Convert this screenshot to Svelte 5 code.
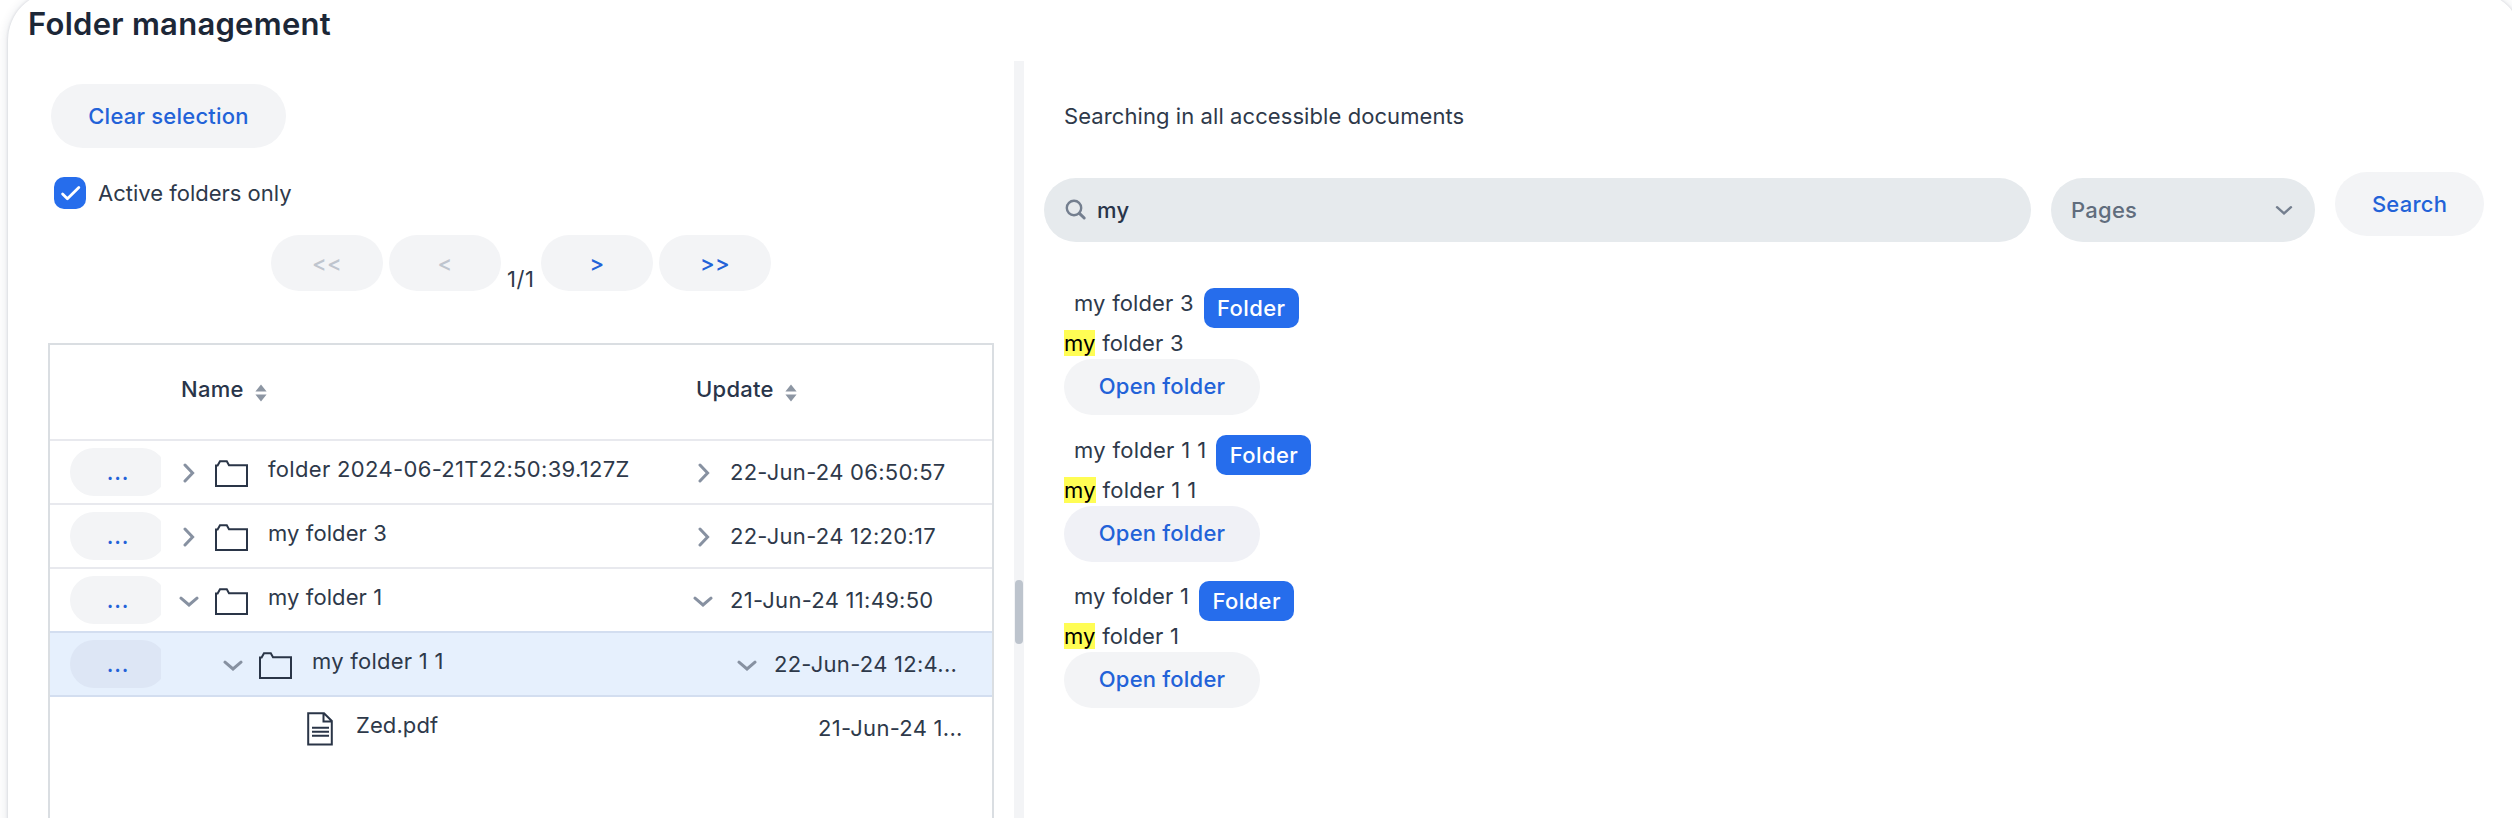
<script>
  const rows = [
    { name: 'folder 2024-06-21T22:50:39.127Z', date: '22-Jun-24 06:50:57', level: 0, open: false, kind: 'folder', tracking: 0.33 },
    { name: 'my folder 3', date: '22-Jun-24 12:20:17', level: 0, open: false, kind: 'folder' },
    { name: 'my folder 1', date: '21-Jun-24 11:49:50', level: 0, open: true, kind: 'folder' },
    { name: 'my folder 1 1', date: '22-Jun-24 12:4...', level: 1, open: true, kind: 'folder', selected: true, tracking: 0.25 },
    { name: 'Zed.pdf', date: '21-Jun-24 1...', level: 2, kind: 'file' }
  ];
  const results = ['3', '1 1', '1'];
</script>

{#snippet chevron(open)}
  <span class="toggle" class:down={open}>
    {#if open === true}
      <svg width="20" height="12" viewBox="0 0 20 12"><path d="M2 2.2 10 9 18 2.2" /></svg>
    {:else if open === false}
      <svg width="12" height="20" viewBox="0 0 12 20"><path d="M2 2 9.6 10 2 18" /></svg>
    {/if}
  </span>
{/snippet}

{#snippet sorter()}
  <svg class="sorter" width="12" height="18" viewBox="0 0 12 18"><path d="M6 0.5 11.6 7.6H0.4ZM0.4 10.6H11.6L6 17.6Z" /></svg>
{/snippet}

<div class="page">
  <main class="card">
    <h1>Folder management</h1>
    <div class="split">
      <section class="left">
        <button class="btn clear">Clear selection</button>
        <div class="check">
          <span class="box">
            <svg width="32" height="32" viewBox="0 0 32 32"><path d="M8.6 17 13.4 21.8 24.8 10.6" /></svg>
          </span>
          <span>Active folders only</span>
        </div>
        <div class="pager">
          <button class="btn off">&lt;&lt;</button>
          <button class="btn off">&lt;</button>
          <span class="count">1/1</span>
          <button class="btn">&gt;</button>
          <button class="btn">&gt;&gt;</button>
        </div>
        <div class="grid">
          <div class="head">
            <div class="col-name"><span>Name</span>{@render sorter()}</div>
            <div class="col-date"><span>Update</span>{@render sorter()}</div>
          </div>
          {#each rows as row}
            <div class="row" class:selected={row.selected} class:file={row.kind === 'file'}>
              <div class="menu">
                {#if row.kind === 'folder'}<button class="btn dots">...</button>{/if}
              </div>
              <div class="col-name" style:padding-left="{row.level * 44}px">
                {@render chevron(row.open)}
                <span class="icon">
                  {#if row.kind === 'folder'}
                    <svg width="34" height="28" viewBox="0 0 34 28"><path d="M1 26V5.6H2.6L5 1.3H11.8L14 5.2H32V26Z" /></svg>
                  {:else}
                    <svg width="26" height="34" viewBox="0 0 26 34"><path d="M1.2 1.2H17L24.8 9V32.4H1.2ZM16.5 1.5V9.6H24.5" /><path d="M5 15.8H22M5 19.8H22M5 23.8H22" /></svg>
                  {/if}
                </span>
                <span class="name" style:letter-spacing="{row.tracking ?? 0.1}px">{row.name}</span>
              </div>
              <div class="col-date" style:padding-left="{row.level * 44}px">
                {@render chevron(row.open)}
                <span>{row.date}</span>
              </div>
            </div>
          {/each}
        </div>
      </section>
      <div class="splitter"><div class="handle"></div></div>
      <section class="right">
        <p class="scope">Searching in all accessible documents</p>
        <div class="bar">
          <div class="field query">
            <svg width="22" height="22" viewBox="0 0 22 22"><circle cx="9" cy="9" r="7.2" /><path d="M14.4 14.4 19.2 19" /></svg>
            <span>my</span>
          </div>
          <div class="field kind">
            <span>Pages</span>
            <svg width="18" height="12" viewBox="0 0 18 12"><path d="M2 3.2 9 9.4 16 3.2" /></svg>
          </div>
          <button class="btn search">Search</button>
        </div>
        <div class="results">
          {#each results as n}
            <article>
              <div class="title"><span>my folder {n}</span><span class="tag">Folder</span></div>
              <div class="snippet"><mark>my</mark> folder {n}</div>
              <button class="btn open">Open folder</button>
            </article>
          {/each}
        </div>
      </section>
    </div>
  </main>
</div>

<style>
  :global(body) {
    background: #fff;
  }
  .page {
    height: 818px;
    overflow: hidden;
    font: 400 22px/36px Inter, "Liberation Sans", sans-serif;
    letter-spacing: 0.08px;
    color: #2e394a;
  }
  .card {
    box-sizing: border-box;
    height: 900px;
    margin: -8px -10px 0 8px;
    padding-top: 8px;
    border-radius: 48px;
    background: #fff;
    box-shadow: 0 0 3px rgba(26, 40, 70, 0.16), 0 2px 12px rgba(26, 40, 70, 0.14);
  }
  h1 {
    margin: 0;
    height: 61px;
    padding-left: 20px;
    font-size: 31px;
    line-height: 48px;
    font-weight: 600;
    letter-spacing: 0.27px;
    color: #1c2737;
  }
  .split {
    display: flex;
    height: 800px;
  }
  .left {
    width: 946px;
    flex: none;
    padding: 23px 20px 0 40px;
    display: flex;
    flex-direction: column;
  }
  .btn {
    border: 0;
    margin: 0;
    padding: 0;
    font: inherit;
    font-weight: 500;
    letter-spacing: 0.22px;
    color: #2262d8;
    background: #f3f4f6;
    display: flex;
    align-items: center;
    justify-content: center;
    flex: none;
    border-radius: 32px;
    height: 64px;
  }
  .clear {
    width: 235px;
    margin-left: 3px;
  }
  .check {
    display: flex;
    align-items: center;
    gap: 12px;
    height: 32px;
    margin: 29px 0 26px 6px;
    letter-spacing: 0;
  }
  .box {
    width: 32px;
    height: 32px;
    border-radius: 10px;
    background: #266dec;
  }
  svg {
    display: block;
    flex: none;
  }
  svg path,
  svg circle {
    fill: none;
    stroke: currentColor;
    stroke-width: 2;
  }
  .box path {
    stroke: #fff;
    stroke-width: 2.8;
    stroke-linecap: round;
    stroke-linejoin: round;
  }
  .pager {
    display: flex;
    gap: 6px;
    padding-left: 223px;
    height: 56px;
  }
  .pager .btn {
    width: 112px;
    height: 56px;
    border-radius: 28px;
  }
  .pager .off {
    color: #bfc5ce;
  }
  .count {
    width: 28px;
    padding-top: 26px;
    letter-spacing: 0.5px;
    white-space: nowrap;
  }
  .grid {
    margin-top: 52px;
    width: 942px;
    flex: 1;
    border: 2px solid #dadee2;
    border-bottom: 0;
  }
  .head {
    display: flex;
    height: 94px;
    align-items: center;
    padding-left: 131px;
    border-bottom: 2px solid #e8e9ee;
    font-weight: 500;
    letter-spacing: 0.25px;
    color: #29354a;
  }
  .head > div {
    display: flex;
    align-items: center;
    gap: 11px;
    padding-bottom: 6px;
  }
  .head .col-date {
    padding-left: 1px;
  }
  .sorter {
    margin-top: 8px;
  }
  .sorter path {
    fill: #8d96a3;
    stroke: none;
  }
  .row {
    display: flex;
    height: 62px;
    border-bottom: 2px solid #e8e9ee;
  }
  .row.selected {
    background: #e6f0fd;
  }
  .row.selected,
  .row:nth-child(4) {
    border-bottom-color: #d3def0;
  }
  .row.file {
    border-bottom: 0;
  }
  .menu {
    width: 91px;
    margin: 7px 21px 7px 20px;
    overflow: hidden;
  }
  .dots {
    width: 96px;
    height: 48px;
    border-radius: 24px;
    letter-spacing: 0.8px;
  }
  .selected .dots {
    background: #dde6f5;
  }
  .col-name,
  .col-date {
    box-sizing: border-box;
    display: flex;
    align-items: center;
    white-space: nowrap;
  }
  .col-name {
    width: 514px;
  }
  .row .col-date {
    letter-spacing: 0.27px;
  }
  .toggle {
    box-sizing: border-box;
    width: 34px;
    margin-left: -4px;
    padding: 2px 12px 0 0;
    display: flex;
    justify-content: center;
    color: #8791a1;
  }
  .toggle.down {
    padding: 4px 13px 0 0;
  }
  .col-date .toggle {
    width: 38px;
    padding-right: 15px;
  }
  .col-date .toggle.down {
    padding-right: 17px;
  }
  .toggle path {
    stroke-width: 3;
    stroke-linecap: round;
  }
  .icon {
    width: 34px;
    display: flex;
    justify-content: center;
    margin: 4px 19px 0 3px;
    color: #2a3547;
  }
  .file .icon {
    margin-top: 2px;
  }
  .name {
    padding-bottom: 6px;
  }
  .splitter {
    box-sizing: border-box;
    width: 10px;
    flex: none;
    background: #f3f4f6;
    padding-top: 519px;
  }
  .handle {
    width: 8px;
    height: 64px;
    margin: 0 auto;
    border-radius: 4px;
    background: #bdc4cd;
  }
  .right {
    flex: 1;
    padding: 37px 0 0 20px;
  }
  .scope {
    margin: 0 0 44px 20px;
  }
  .bar {
    display: flex;
    height: 64px;
  }
  .field {
    box-sizing: border-box;
    display: flex;
    flex: none;
    align-items: center;
    height: 64px;
    border-radius: 32px;
    background: #e6eaed;
    font-weight: 500;
    letter-spacing: 0.25px;
    color: #29354a;
    margin-right: 20px;
  }
  .query {
    width: 987px;
    padding-left: 21px;
    gap: 10px;
  }
  .query svg,
  .kind svg {
    color: #747f8f;
  }
  .field path,
  .field circle {
    stroke-width: 2.4;
    stroke-linecap: round;
  }
  .query path {
    stroke-width: 3;
  }
  .kind {
    width: 264px;
    padding: 0 22px 0 20px;
    justify-content: space-between;
    color: #616d7d;
  }
  .search {
    width: 149px;
    margin-top: -6px;
  }
  .results {
    padding: 46px 0 0 20px;
    word-spacing: 0.5px;
  }
  article {
    height: 146.5px;
  }
  article:nth-child(2) {
    letter-spacing: 0.2px;
  }
  .title {
    display: flex;
    align-items: flex-start;
    padding-left: 10px;
    height: 40px;
    line-height: 30px;
  }
  .tag {
    width: 95px;
    height: 40px;
    margin-left: 10px;
    border-radius: 10px;
    background: #266dec;
    color: #fff;
    font-weight: 500;
    letter-spacing: 0.4px;
    line-height: 40px;
    text-align: center;
  }
  .snippet {
    height: 31px;
    line-height: 31px;
  }
  mark {
    background: #fffd54;
    color: #000;
  }
  .open {
    width: 196px;
    height: 56px;
    padding-bottom: 2px;
    border-radius: 28px;
  }
  article:nth-child(2) .open {
    background: #f0f1f6;
  }
</style>
